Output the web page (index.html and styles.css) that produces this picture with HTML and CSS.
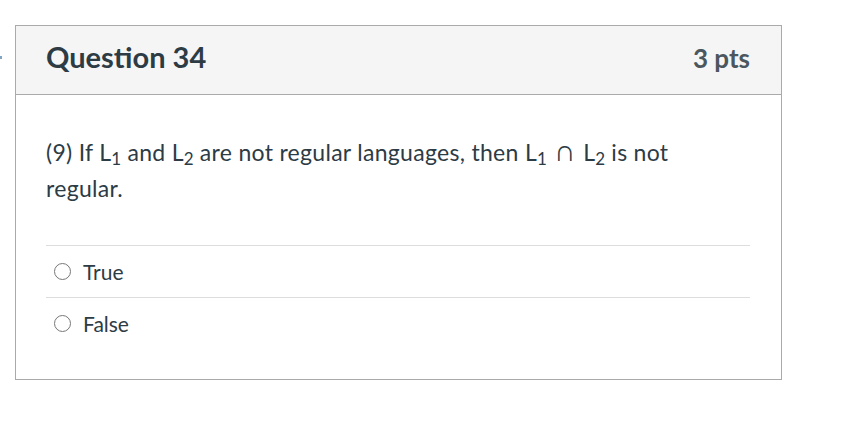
FILE: index.html
```html
<!DOCTYPE html>
<html>
<head>
<meta charset="utf-8">
<link rel="stylesheet" href="styles.css">
</head>
<body>
<span class="edge-dot"></span>
<div class="question">
  <div class="q-header">
    <h2 class="q-title">Question 34</h2>
    <span class="q-pts">3 pts</span>
  </div>
  <div class="q-body">
    <p class="q-text">(9) If L<sub>1</sub> and L<sub>2</sub> are not regular languages, then L<sub>1</sub> <span class="cap">∩</span> L<sub>2</sub> is not regular.</p>
    <div class="answers">
      <label class="answer"><span class="radio"></span><span class="a-text">True</span></label>
      <label class="answer"><span class="radio"></span><span class="a-text">False</span></label>
    </div>
  </div>
</div>
</body>
</html>
```
FILE: styles.css
```css
html, body {
  margin: 0;
  padding: 0;
  background: #ffffff;
  font-family: Lato, "Noto Sans", sans-serif;
  color: #2d3b45;
}
.edge-dot {
  position: absolute;
  left: 0;
  top: 56px;
  width: 2px;
  height: 3px;
  background: #7fa6c4;
}
.question {
  margin: 25px 0 0 15px;
  width: 765px;
  border: 1px solid #aaaaaa;
  background: #ffffff;
}
.q-header {
  box-sizing: border-box;
  height: 69px;
  background: #f5f5f5;
  border-bottom: 1px solid #aaaaaa;
  display: flex;
  align-items: baseline;
  justify-content: space-between;
  padding: 13px 31px 0 30px;
}
.q-title {
  margin: 0;
  font-size: 29px;
  line-height: 35px;
  font-weight: 700;
  color: #2d3b45;
}
.q-pts {
  font-size: 26px;
  font-weight: 700;
  color: #4b565e;
}
.q-body {
  padding: 39px 31px 30px 30px;
}
.q-text {
  margin: 0 0 39px 0;
  font-size: 23px;
  letter-spacing: 0.3px;
  line-height: 36px;
  width: 660px;
}
.q-text sub {
  font-size: 17px;
  vertical-align: -4px;
  line-height: 0;
  letter-spacing: 0;
}
.q-text .cap {
  font-family: "DejaVu Sans", sans-serif;
  font-size: 30px;
  font-weight: 200;
  line-height: 0;
  margin: 0 1px;
}
.answers {
  display: flex;
  flex-direction: column;
}
.answer {
  display: flex;
  align-items: center;
  height: 51px;
  border-top: 1px solid #dddddd;
  font-size: 21px;
}
.radio {
  width: 15px;
  height: 15px;
  border: 1.5px solid #777777;
  border-radius: 50%;
  margin-left: 8px;
  margin-right: 12px;
  flex: none;
}
```
